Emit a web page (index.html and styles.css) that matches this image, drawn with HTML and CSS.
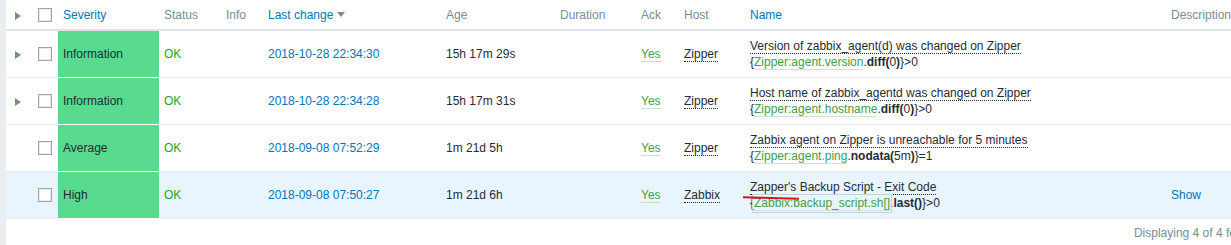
FILE: index.html
```html
<!DOCTYPE html>
<html lang="en">
<head>
  <meta charset="UTF-8" />
  <title>Problems</title>
  <link rel="stylesheet" href="styles.css">
</head>
<body>
  <div class="list">
    <table class="list-table">
      <colgroup>
        <col style="width: 27px">
        <col style="width: 25px">
        <col style="width: 101px">
        <col style="width: 62px">
        <col style="width: 42px">
        <col style="width: 178px">
        <col style="width: 114px">
        <col style="width: 81px">
        <col style="width: 43px">
        <col style="width: 66px">
        <col style="width: 421px">
        <col>
      </colgroup>
      <thead>
        <tr>
          <th class="cell-toggle"><span class="toggle"></span></th>
          <th class="cell-check"><span class="checkbox"></span></th>
          <th><a class="sort-link">Severity</a></th>
          <th>Status</th>
          <th>Info</th>
          <th><a class="sort-link">Last change</a><span class="sort-down"></span></th>
          <th>Age</th>
          <th>Duration</th>
          <th>Ack</th>
          <th>Host</th>
          <th><a class="sort-link">Name</a></th>
          <th>Description</th>
        </tr>
      </thead>
      <tbody>
        <tr>
          <td class="cell-toggle"><span class="toggle"></span></td>
          <td class="cell-check"><span class="checkbox"></span></td>
          <td class="severity">Information</td>
          <td class="status-ok">OK</td>
          <td></td>
          <td><a class="link">2018-10-28 22:34:30</a></td>
          <td>15h 17m 29s</td>
          <td></td>
          <td><a class="ack">Yes</a></td>
          <td><span class="hint">Zipper</span></td>
          <td>
            <span class="hint">Version of zabbix_agent(d) was changed on Zipper</span><br>
            {<a class="macro">Zipper:agent.version</a>.<b>diff(</b>0<b>)</b>}&gt;0
          </td>
          <td></td>
        </tr>
        <tr>
          <td class="cell-toggle"><span class="toggle"></span></td>
          <td class="cell-check"><span class="checkbox"></span></td>
          <td class="severity">Information</td>
          <td class="status-ok">OK</td>
          <td></td>
          <td><a class="link">2018-10-28 22:34:28</a></td>
          <td>15h 17m 31s</td>
          <td></td>
          <td><a class="ack">Yes</a></td>
          <td><span class="hint">Zipper</span></td>
          <td>
            <span class="hint">Host name of zabbix_agentd was changed on Zipper</span><br>
            {<a class="macro">Zipper:agent.hostname</a>.<b>diff(</b>0<b>)</b>}&gt;0
          </td>
          <td></td>
        </tr>
        <tr>
          <td class="cell-toggle"></td>
          <td class="cell-check"><span class="checkbox"></span></td>
          <td class="severity">Average</td>
          <td class="status-ok">OK</td>
          <td></td>
          <td><a class="link">2018-09-08 07:52:29</a></td>
          <td>1m 21d 5h</td>
          <td></td>
          <td><a class="ack">Yes</a></td>
          <td><span class="hint">Zipper</span></td>
          <td>
            <span class="hint">Zabbix agent on Zipper is unreachable for 5 minutes</span><br>
            {<a class="macro">Zipper:agent.ping</a>.<b>nodata(</b>5m<b>)</b>}=1
          </td>
          <td></td>
        </tr>
        <tr class="row-hover">
          <td class="cell-toggle"></td>
          <td class="cell-check"><span class="checkbox"></span></td>
          <td class="severity">High</td>
          <td class="status-ok">OK</td>
          <td></td>
          <td><a class="link">2018-09-08 07:50:27</a></td>
          <td>1m 21d 6h</td>
          <td></td>
          <td><a class="ack">Yes</a></td>
          <td><span class="hint">Zabbix</span></td>
          <td class="cell-name">
            <span class="hint">Zapper's Backup Script - Exit Code</span><br>
            {<a class="macro macro-focus">Zabbix:backup_script.sh[]</a>.<b>last()</b>}&gt;0
            <span class="mark-line"></span>
          </td>
          <td><a class="link">Show</a></td>
        </tr>
      </tbody>
    </table>
    <div class="table-stats">Displaying 4 of 4 found</div>
  </div>
</body>
</html>
```

FILE: styles.css
```css
body {
  margin: 0;
  background: #ebeef0;
  font-family: "Liberation Sans", Arial, sans-serif;
  font-size: 12px;
  color: #1f2c33;
  overflow: hidden;
}

.list {
  margin-left: 6px;
  width: 1255px;
  min-height: 245px;
  background: #fff;
}

.list-table {
  width: 100%;
  border-collapse: collapse;
  table-layout: fixed;
}

.list-table th,
.list-table td {
  padding: 7px 5px;
  line-height: 16px;
  text-align: left;
  vertical-align: middle;
  white-space: nowrap;
}

.list-table th {
  padding: 7px 5px 6px;
  font-weight: normal;
  color: #768d99;
  border-bottom: 2px solid #dfe4e7;
}

.list-table td {
  border-bottom: 1px solid #ebeef0;
}

.row-hover td {
  background: #e8f5ff;
}

.sort-link {
  color: #0275b8;
}

.sort-down {
  display: inline-block;
  margin-left: 4px;
  vertical-align: 2px;
  border-left: 4px solid transparent;
  border-right: 4px solid transparent;
  border-top: 5px solid #768d99;
}

.cell-toggle {
  padding-left: 9px !important;
}

.toggle {
  display: inline-block;
  vertical-align: -1px;
  border-top: 4px solid transparent;
  border-bottom: 4px solid transparent;
  border-left: 6px solid #768d99;
}

.cell-check {
  padding-left: 5px !important;
}

.checkbox {
  display: block;
  width: 12px;
  height: 12px;
  border: 1px solid #a4a4a4;
  background: #fff;
  box-shadow: inset 0 0 0 1px #ececec;
}

.list-table td.severity {
  background: #59db8f;
  border-bottom: 1px solid #fff;
  color: #1f2c33;
}

.status-ok {
  color: #1aa81a;
}

.link {
  color: #0275b8;
}

.ack {
  color: #429e47;
  border-bottom: 1px solid #c6e3c8;
}

.hint {
  border-bottom: 1px dotted #1f2c33;
}

.macro {
  color: #429e47;
  border-bottom: 1px solid #d4dde2;
}

.macro-focus {
  outline: 1px solid #c4d3dc;
  outline-offset: 1px;
}

.cell-name {
  position: relative;
}

.mark-line {
  position: absolute;
  left: -2px;
  top: 25px;
  width: 56px;
  height: 2px;
  background: #d4161b;
  transform: rotate(1.5deg);
}

.table-stats {
  padding: 7px 5px 9px;
  line-height: 14px;
  text-align: right;
  color: #768d99;
}
```
